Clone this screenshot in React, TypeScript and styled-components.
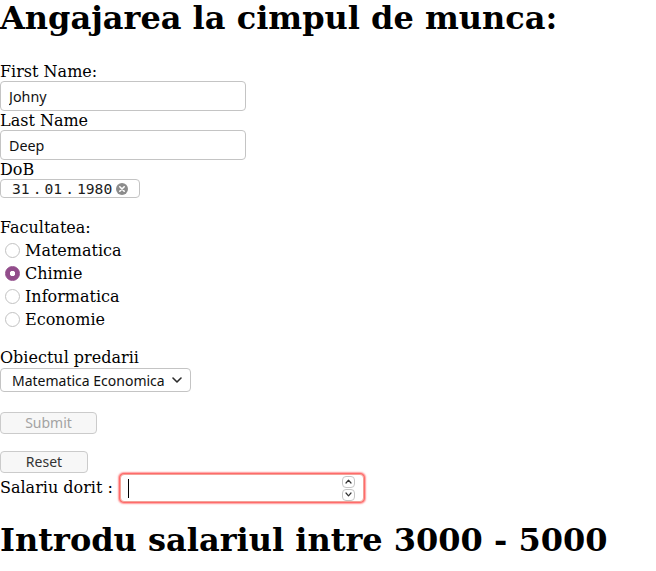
import React from 'react';
import styled, { createGlobalStyle } from 'styled-components';

const Global = createGlobalStyle`
  html, body { margin: 0; padding: 0; background: #fff; }
  body { font-family: "DejaVu Serif", serif; font-size: 16px; color: #000; }
`;

const Page = styled.div`
  display: flex;
  flex-direction: column;
  align-items: flex-start;
`;

const Title = styled.h1<{ $top?: number; $bottom?: number }>`
  margin: ${(p) => p.$top ?? 0}px 0 ${(p) => p.$bottom ?? 0}px;
  font-family: "DejaVu Serif", serif;
  font-size: 32px;
  line-height: 37px;
  font-weight: bold;
  white-space: nowrap;
`;

const Form = styled.form`
  display: flex;
  flex-direction: column;
  align-items: flex-start;
  margin: 0;
`;

const Label = styled.div<{ $top?: number }>`
  margin-top: ${(p) => p.$top ?? 0}px;
  height: 19px;
  line-height: 19px;
  white-space: nowrap;
`;

const TextInput = styled.input`
  box-sizing: border-box;
  width: 246px;
  height: 30px;
  margin: 0;
  padding: 0 8px;
  border: 1px solid #c4c4c4;
  border-radius: 4px;
  background: #fff;
  color: #111;
  font: 14.3px "Noto Sans", sans-serif;
  outline: none;
`;

const DateBox = styled.div`
  box-sizing: border-box;
  display: flex;
  align-items: center;
  width: 140px;
  height: 19px;
  padding-left: 11px;
  border: 1px solid #c4c4c4;
  border-radius: 4px;
  font: 14.67px "DejaVu Sans Mono", monospace;
  color: #1c1c1c;
  line-height: 17px;
`;

const DateSep = styled.span`
  padding: 0 3px;
`;

const ClearIcon = styled.svg`
  margin-left: 4px;
  flex: none;
`;

const RadioRow = styled.label`
  display: flex;
  align-items: flex-start;
  box-sizing: border-box;
  height: 23px;
  padding-top: 4px;
  line-height: 19px;
`;

const Radio = styled.input.attrs({ type: 'radio' })`
  appearance: none;
  -webkit-appearance: none;
  box-sizing: border-box;
  flex: none;
  width: 15px;
  height: 15px;
  margin: 2px 5px 0 5px;
  border: 1px solid #c2c2c2;
  border-radius: 50%;
  background: #fff;
  outline: none;
  &:checked {
    border-color: #924d8b;
    background: radial-gradient(circle, #fff 0 2.4px, #924d8b 3px);
  }
`;

const SelectWrap = styled.div`
  position: relative;
  margin-top: 1px;
`;

const Select = styled.select`
  appearance: none;
  -webkit-appearance: none;
  box-sizing: border-box;
  display: block;
  width: 191px;
  height: 24px;
  margin: 0;
  padding: 0 0 0 11px;
  border: 1px solid #c4c4c4;
  border-radius: 4px;
  background: #fff;
  color: #111;
  font: 14px "Noto Sans", sans-serif;
  outline: none;
`;

const Chevron = styled.svg`
  position: absolute;
  right: 9px;
  top: 9px;
  pointer-events: none;
`;

const Button = styled.button<{ $width: number; $top: number; $muted?: boolean }>`
  box-sizing: border-box;
  width: ${(p) => p.$width}px;
  height: 22px;
  margin: ${(p) => p.$top}px 0 0;
  padding: 0;
  border: 1px solid #cbcbcb;
  border-radius: 4px;
  background: #f7f7f7;
  color: ${(p) => (p.$muted ? '#a3a3a3' : '#333')};
  font: 14px "Noto Sans", sans-serif;
  line-height: 20px;
`;

const SalaryRow = styled.div`
  display: flex;
  align-items: center;
  height: 30px;
`;

const SalaryLabel = styled.span`
  margin-top: -2px;
  white-space: nowrap;
`;

const SalaryBox = styled.div`
  box-sizing: border-box;
  display: flex;
  align-items: center;
  width: 244px;
  height: 28px;
  margin-left: 7px;
  padding: 0 8px 0 7px;
  border: 1px solid #f3a297;
  border-radius: 4px;
  box-shadow: 0 0 0 1px #ff6b6b, 0 0 1.5px 1.6px rgba(255, 70, 70, 0.55);
  background: #fff;
`;

const Caret = styled.span`
  flex: none;
  width: 1px;
  height: 19px;
  background: #000;
`;

const SalaryInput = styled.input`
  flex: 1;
  min-width: 0;
  height: 24px;
  margin: 0;
  padding: 0;
  border: none;
  outline: none;
  background: transparent;
  caret-color: transparent;
  font: 14px "Noto Sans", sans-serif;
`;

const Spinner = styled.div`
  display: flex;
  flex-direction: column;
  gap: 1px;
`;

const SpinBtn = styled.div`
  box-sizing: border-box;
  display: flex;
  align-items: center;
  justify-content: center;
  width: 13px;
  height: 12px;
  border: 1px solid #c6c6c6;
  border-radius: 4px;
  background: #fff;
`;

const App: React.FC = () => (
  <Page>
    <Global />
    <Title $bottom={25}>Angajarea la cimpul de munca:</Title>
    <Form onSubmit={(e) => e.preventDefault()}>
      <Label>First Name:</Label>
      <TextInput defaultValue="Johny" />
      <Label>Last Name</Label>
      <TextInput defaultValue="Deep" />
      <Label>DoB</Label>
      <DateBox>
        <span>31</span>
        <DateSep>.</DateSep>
        <span>01</span>
        <DateSep>.</DateSep>
        <span>1980</span>
        <ClearIcon width="12" height="12" viewBox="0 0 12 12">
          <circle cx="6" cy="6" r="6" fill="#8c8c8c" />
          <path d="M3.8 3.8 L8.2 8.2 M8.2 3.8 L3.8 8.2" stroke="#fff" strokeWidth="1.6" strokeLinecap="round" />
        </ClearIcon>
      </DateBox>

      <Label $top={20}>Facultatea:</Label>
      <RadioRow>
        <Radio name="fac" value="mat" />
        Matematica
      </RadioRow>
      <RadioRow>
        <Radio name="fac" value="chim" defaultChecked />
        Chimie
      </RadioRow>
      <RadioRow>
        <Radio name="fac" value="info" />
        Informatica
      </RadioRow>
      <RadioRow>
        <Radio name="fac" value="eco" />
        Economie
      </RadioRow>

      <Label $top={19}>Obiectul predarii</Label>
      <SelectWrap>
        <Select defaultValue="me">
          <option value="me">Matematica Economica</option>
          <option value="ch">Chimie</option>
        </Select>
        <Chevron width="10" height="6" viewBox="0 0 10 6">
          <path d="M1 1 L5 5 L9 1" fill="none" stroke="#2b2b2b" strokeWidth="1.6" strokeLinecap="round" strokeLinejoin="round" />
        </Chevron>
      </SelectWrap>

      <Button type="submit" $width={97} $top={20} $muted>
        Submit
      </Button>
      <Button type="reset" $width={88} $top={17}>
        Reset
      </Button>

      <SalaryRow>
        <SalaryLabel>Salariu dorit :</SalaryLabel>
        <SalaryBox>
          <Caret />
          <SalaryInput />
          <Spinner>
            <SpinBtn>
              <svg width="7" height="5" viewBox="0 0 7 5">
                <path d="M1 4 L3.5 1.2 L6 4" fill="none" stroke="#333" strokeWidth="1.2" strokeLinecap="round" strokeLinejoin="round" />
              </svg>
            </SpinBtn>
            <SpinBtn>
              <svg width="7" height="5" viewBox="0 0 7 5">
                <path d="M1 1 L3.5 3.8 L6 1" fill="none" stroke="#333" strokeWidth="1.2" strokeLinecap="round" strokeLinejoin="round" />
              </svg>
            </SpinBtn>
          </Spinner>
        </SalaryBox>
      </SalaryRow>
    </Form>
    <Title $top={19}>Introdu salariul intre 3000 - 5000</Title>
  </Page>
);

export default App;
